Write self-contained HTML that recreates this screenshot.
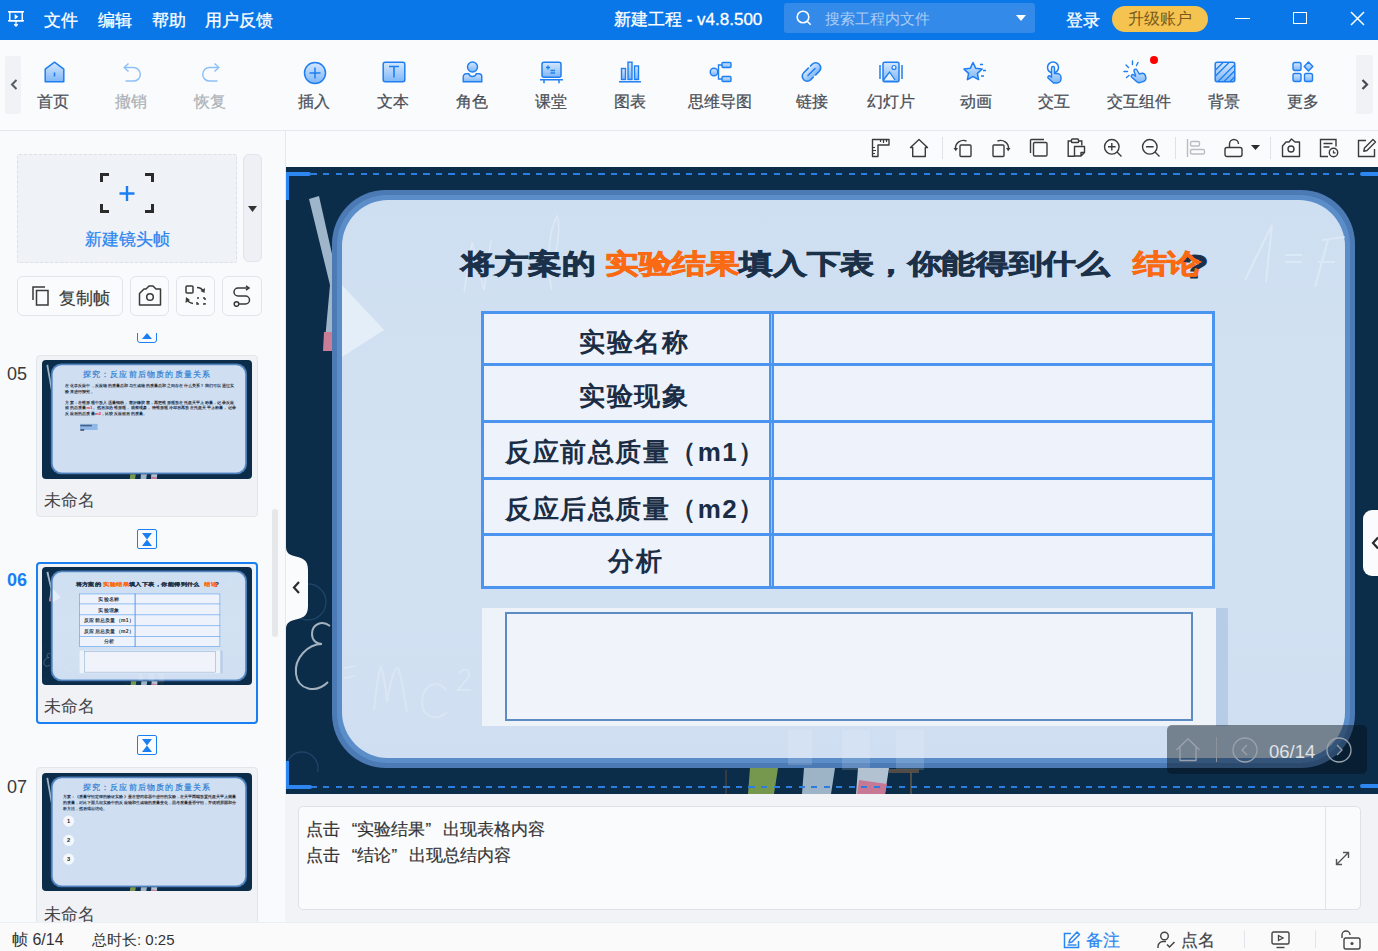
<!DOCTYPE html>
<html><head><meta charset="utf-8">
<style>
*{box-sizing:border-box;margin:0;padding:0}
html,body{width:1378px;height:951px;overflow:hidden;background:#f9fafb;font-family:"Liberation Sans",sans-serif;color:#333}
.a{position:absolute}
.t{position:absolute;white-space:nowrap;line-height:1}
.ql{display:inline-block;width:17.4px;text-align:right;letter-spacing:0}
.qr{display:inline-block;width:17.4px;text-align:left}
/* title bar */
#tb{left:0;top:0;width:1378px;height:40px;background:#0a77e8}
.menu{color:#fff;font-size:16.5px;top:12px;-webkit-text-stroke:.3px #fff}
/* toolbar */
#tool{left:0;top:40px;width:1378px;height:91px;background:#fafbfc;border-bottom:1px solid #e3e7ec}
.lbl{font-size:16px;color:#4a4f57;top:94px;text-align:center;width:80px;margin-left:-40px;-webkit-text-stroke:.25px currentColor}
.dis{color:#aeb2b8}
.ic{position:absolute;top:62px;width:22px;height:22px;margin-left:-11px}
/* left panel */
#lp{left:0;top:131px;width:286px;height:791px;background:#f9fafb;border-right:1px solid #e4e7eb}
#ctool{left:286px;top:131px;width:1092px;height:36px;background:#fafbfc}
#canvas{left:286px;top:167px;width:1092px;height:627px;background:#0c2d49;overflow:hidden}
#notes{left:285px;top:794px;width:1093px;height:128px;background:#f1f3f7}
#status{left:0;top:922px;width:1378px;height:29px;background:#fafafb;border-top:1px solid #eceef1}
</style></head><body>

<!-- TITLE BAR -->
<div id="tb" class="a">
  <svg class="a" style="left:8px;top:10px" width="16" height="17" viewBox="0 0 18 19"><path d="M2 2h14v10H2z" fill="none" stroke="#fff" stroke-width="1.6"/><path d="M0 2h18M0 12h18" stroke="#fff" stroke-width="1.6"/><path d="M7.5 4.5l4 3-4 3z" fill="#fff"/><path d="M9 12v6M7 16l2 2 2-2" stroke="#fff" stroke-width="1.4" fill="none"/></svg>
  <div class="t menu" style="left:44px">文件</div>
  <div class="t menu" style="left:98px">编辑</div>
  <div class="t menu" style="left:152px">帮助</div>
  <div class="t menu" style="left:205px">用户反馈</div>
  <div class="t menu" style="left:614px;top:11px;font-size:17px">新建工程 - v4.8.500</div>
  <div class="a" style="left:784px;top:3px;width:251px;height:30px;background:#338ae8;border-radius:3px"></div>
  <svg class="a" style="left:796px;top:10px" width="17" height="16" viewBox="0 0 17 16"><circle cx="7" cy="7" r="5.8" fill="none" stroke="#fff" stroke-width="1.6"/><path d="M11.2 11.2l3.5 3.5" stroke="#fff" stroke-width="1.6"/></svg>
  <div class="t" style="left:825px;top:11px;font-size:15px;color:#a9cdf6">搜索工程内文件</div>
  <svg class="a" style="left:1016px;top:15px" width="10" height="6"><path d="M0 0h10L5 6z" fill="#fff"/></svg>
  <div class="t menu" style="left:1066px;top:12px">登录</div>
  <div class="a" style="left:1112px;top:6px;width:96px;height:26px;background:#f5c350;border-radius:13px"></div>
  <div class="t" style="left:1128px;top:11px;font-size:16px;color:#7a5a1c">升级账户</div>
  <div class="a" style="left:1235px;top:18px;width:15px;height:1px;background:#fff"></div>
  <div class="a" style="left:1293px;top:12px;width:14px;height:12px;border:1.5px solid #fff"></div>
  <svg class="a" style="left:1350px;top:11px" width="15" height="15"><path d="M1 1l13 13M14 1L1 14" stroke="#fff" stroke-width="1.5"/></svg>
</div>

<!-- TOOLBAR -->
<div id="tool" class="a"></div>
<svg width="0" height="0" style="position:absolute"><defs>
<linearGradient id="g1" x1="0" y1="0" x2="0" y2="1"><stop offset="0" stop-color="#d6e8fd"/><stop offset="1" stop-color="#7db6f7"/></linearGradient>
</defs></svg>
<!-- home -->
<svg class="a" style="left:44px;top:61px" width="21" height="22" viewBox="0 0 21 22"><path d="M10.5 1.2L19.8 8.2V20.8H1.2V8.2Z" fill="url(#g1)" stroke="#1f7ef0" stroke-width="1.5" stroke-linejoin="round"/><path d="M10.5 11.5v4" stroke="#1f7ef0" stroke-width="1.6"/></svg>
<div class="t lbl" style="left:53px">首页</div>
<!-- undo -->
<svg class="a" style="left:122px;top:61px" width="20" height="22" viewBox="0 0 20 22"><path d="M3 6.5h8.5a6.8 6.8 0 0 1 0 13.6H3.5" fill="none" stroke="#8ec0f8" stroke-width="1.5"/><path d="M6.5 2.5L2.2 6.5 6.5 10.5" fill="none" stroke="#8ec0f8" stroke-width="1.5"/></svg>
<div class="t lbl dis" style="left:131px">撤销</div>
<!-- redo -->
<svg class="a" style="left:201px;top:61px" width="20" height="22" viewBox="0 0 20 22"><path d="M17 6.5H8.5a6.8 6.8 0 0 0 0 13.6h8" fill="none" stroke="#8ec0f8" stroke-width="1.5"/><path d="M13.5 2.5L17.8 6.5 13.5 10.5" fill="none" stroke="#8ec0f8" stroke-width="1.5"/></svg>
<div class="t lbl dis" style="left:210px">恢复</div>
<!-- insert -->
<svg class="a" style="left:303px;top:61px" width="24" height="24" viewBox="0 0 24 24"><circle cx="12" cy="12" r="10.5" fill="url(#g1)" stroke="#1f7ef0" stroke-width="1.5"/><path d="M12 6.5v11M6.5 12h11" stroke="#1f7ef0" stroke-width="1.5"/></svg>
<div class="t lbl" style="left:314px">插入</div>
<!-- text -->
<svg class="a" style="left:382px;top:61px" width="24" height="22" viewBox="0 0 24 22"><rect x="1.2" y="1.2" width="21.6" height="19.6" rx="2" fill="url(#g1)" stroke="#1f7ef0" stroke-width="1.5"/><path d="M7 5.5h10M12 5.5v11" stroke="#1f7ef0" stroke-width="1.6"/></svg>
<div class="t lbl" style="left:393px">文本</div>
<!-- role -->
<svg class="a" style="left:462px;top:61px" width="21" height="22" viewBox="0 0 21 22"><circle cx="10.5" cy="6" r="5" fill="url(#g1)" stroke="#1f7ef0" stroke-width="1.4"/><path d="M1.2 20.8v-5a3 3 0 0 1 3-3h2.5a4 4 0 0 0 7.6 0h2.5a3 3 0 0 1 3 3v5z" fill="url(#g1)" stroke="#1f7ef0" stroke-width="1.4"/><path d="M9 6.5h.1M12 6.5h.1" stroke="#1f7ef0" stroke-width="1.2"/></svg>
<div class="t lbl" style="left:472px">角色</div>
<!-- classroom -->
<svg class="a" style="left:540px;top:61px" width="23" height="23" viewBox="0 0 23 23"><rect x="2" y="1.2" width="19" height="15" rx="2" fill="url(#g1)" stroke="#1f7ef0" stroke-width="1.5"/><path d="M6 6.5h4M8 4.5v4M10.5 9.5h4.5M10.5 12h4.5" stroke="#1f7ef0" stroke-width="1.4"/><path d="M0 18.8h23M4 18.8v3.5M19 18.8v3.5" stroke="#1f7ef0" stroke-width="1.5"/></svg>
<div class="t lbl" style="left:551px">课堂</div>
<!-- chart -->
<svg class="a" style="left:619px;top:61px" width="22" height="22" viewBox="0 0 22 22"><rect x="2.5" y="7.5" width="4" height="11" fill="url(#g1)" stroke="#1f7ef0" stroke-width="1.4"/><rect x="9" y="1.2" width="4" height="17.3" fill="url(#g1)" stroke="#1f7ef0" stroke-width="1.4"/><rect x="15.5" y="5" width="4" height="13.5" fill="url(#g1)" stroke="#1f7ef0" stroke-width="1.4"/><path d="M0 20.8h22" stroke="#1f7ef0" stroke-width="1.5"/></svg>
<div class="t lbl" style="left:630px">图表</div>
<!-- mindmap -->
<svg class="a" style="left:709px;top:61px" width="23" height="22" viewBox="0 0 23 22"><circle cx="5" cy="11" r="3.8" fill="url(#g1)" stroke="#1f7ef0" stroke-width="1.4"/><rect x="13" y="1.5" width="9" height="5" rx="1" fill="url(#g1)" stroke="#1f7ef0" stroke-width="1.4"/><rect x="13" y="15.5" width="9" height="5" rx="1" fill="url(#g1)" stroke="#1f7ef0" stroke-width="1.4"/><path d="M13 4H9.5V18H13M8.8 11h0" fill="none" stroke="#1f7ef0" stroke-width="1.4"/></svg>
<div class="t lbl" style="left:720px">思维导图</div>
<!-- link -->
<svg class="a" style="left:800px;top:61px" width="23" height="22" viewBox="0 0 23 22"><g transform="rotate(-45 11.5 11)"><rect x="0.5" y="6" width="22" height="10" rx="5" fill="url(#g1)"/><path d="M12 6H5.5a5 5 0 0 0 0 10H9M12.5 16H17.5a5 5 0 0 0 0-10H15" fill="none" stroke="#1f7ef0" stroke-width="1.6" stroke-linecap="round"/><path d="M6.5 11h10" stroke="#1f7ef0" stroke-width="1.5" stroke-linecap="round"/></g></svg>
<div class="t lbl" style="left:812px">链接</div>
<!-- slides -->
<svg class="a" style="left:879px;top:61px" width="24" height="22" viewBox="0 0 24 22"><rect x="4" y="1.2" width="16" height="19.6" rx="1.5" fill="url(#g1)" stroke="#1f7ef0" stroke-width="1.5"/><path d="M4.5 19L10.5 11l5.5 8" fill="#eaf3fe" stroke="#1f7ef0" stroke-width="1.3"/><circle cx="15" cy="6.5" r="2" fill="#eaf3fe" stroke="#1f7ef0" stroke-width="1.2"/><path d="M1 4v14M23 4v14" stroke="#1f7ef0" stroke-width="1.5"/></svg>
<div class="t lbl" style="left:891px">幻灯片</div>
<!-- animation -->
<svg class="a" style="left:963px;top:61px" width="25" height="22" viewBox="0 0 25 22"><path d="M10 1.5l2.8 5.8 6.2.8-4.6 4.3 1.2 6.2L10 15.6l-5.6 3 1.2-6.2L1 8.1l6.2-.8z" fill="url(#g1)" stroke="#1f7ef0" stroke-width="1.5" stroke-linejoin="round"/><path d="M17 3.5h3M20 9.5h3M18 15h3" stroke="#1f7ef0" stroke-width="1.4"/></svg>
<div class="t lbl" style="left:976px">动画</div>
<!-- interact -->
<svg class="a" style="left:1045px;top:61px" width="20" height="23" viewBox="0 0 20 23"><circle cx="8" cy="6.5" r="5.5" fill="none" stroke="#1f7ef0" stroke-width="1.5"/><path d="M6.5 7a1.5 1.5 0 0 1 3 0v5.5h2.5a4 4 0 0 1 4 4V18a4 4 0 0 1-4 4H8.5L3 17a1.5 1.5 0 0 1 2-2l1.5 1.2z" fill="url(#g1)" stroke="#1f7ef0" stroke-width="1.4" stroke-linejoin="round"/></svg>
<div class="t lbl" style="left:1054px">交互</div>
<!-- interact widget -->
<svg class="a" style="left:1121px;top:58px" width="28" height="26" viewBox="0 0 28 26"><path d="M13 13a1.6 1.6 0 0 1 3-1l2.2 4 2-.5a3.5 3.5 0 0 1 4.2 2.3l.4 1.5a3.5 3.5 0 0 1-2.5 4.3l-3.5 1a3 3 0 0 1-3-.8L10.5 19a1.5 1.5 0 0 1 2.2-2l2 1.2z" fill="url(#g1)" stroke="#1f7ef0" stroke-width="1.4" stroke-linejoin="round"/><path d="M11.5 3v3.5M5 7l2.5 2.5M3 13.5h3.5M5.5 19.5l2.5-2M17 4.5l-1.5 3" stroke="#1f7ef0" stroke-width="1.4" stroke-linecap="round"/></svg>
<div class="a" style="left:1150px;top:56px;width:8px;height:8px;border-radius:50%;background:#f00"></div>
<div class="t lbl" style="left:1139px">交互组件</div>
<!-- background -->
<svg class="a" style="left:1214px;top:61px" width="22" height="22" viewBox="0 0 22 22"><rect x="1.2" y="1.2" width="19.6" height="19.6" rx="2" fill="url(#g1)" stroke="#1f7ef0" stroke-width="1.5"/><path d="M1.5 9L9 1.5M1.5 15L15 1.5M4 20.5L20.5 4M10 20.5L20.5 10M16 20.5l4.5-4.5" stroke="#1f7ef0" stroke-width="1.3"/></svg>
<div class="t lbl" style="left:1224px">背景</div>
<!-- more -->
<svg class="a" style="left:1292px;top:61px" width="22" height="22" viewBox="0 0 22 22"><rect x="1" y="1.5" width="8" height="8" rx="1.8" fill="url(#g1)" stroke="#1f7ef0" stroke-width="1.4"/><rect x="1" y="12.5" width="8" height="8" rx="1.8" fill="url(#g1)" stroke="#1f7ef0" stroke-width="1.4"/><rect x="12.5" y="12.5" width="8" height="8" rx="1.8" fill="url(#g1)" stroke="#1f7ef0" stroke-width="1.4"/><path d="M16.5 1l4.3 4.5-4.3 4.5-4.3-4.5z" fill="url(#g1)" stroke="#1f7ef0" stroke-width="1.4" stroke-linejoin="round"/></svg>
<div class="t lbl" style="left:1303px">更多</div>
<!-- scroll arrows -->
<div class="a" style="left:5px;top:56px;width:16px;height:58px;background:#f1f2f6;border-radius:2px"></div>
<svg class="a" style="left:10px;top:79px" width="8" height="11"><path d="M6.5 1L2 5.5 6.5 10" fill="none" stroke="#555b63" stroke-width="2"/></svg>
<div class="a" style="left:1356px;top:55px;width:17px;height:59px;background:#f1f2f6;border-radius:2px"></div>
<svg class="a" style="left:1361px;top:79px" width="8" height="11"><path d="M1.5 1L6 5.5 1.5 10" fill="none" stroke="#454b53" stroke-width="2.2"/></svg>


<!-- LEFT PANEL -->
<div id="lp" class="a"></div>
<!-- new frame -->
<div class="a" style="left:17px;top:154px;width:220px;height:109px;background:#eff2f7;border:1px dashed #dcdfe6;border-radius:2px"></div>
<svg class="a" style="left:99px;top:172px" width="56" height="42" viewBox="0 0 56 42"><path d="M2.5 10V2.5H10M46 2.5h7.5V10M2.5 32v7.5H10M46 39.5h7.5V32" fill="none" stroke="#2b2b2b" stroke-width="3"/><path d="M28 14v15M20.5 21.5h15" stroke="#1a7ff0" stroke-width="2.4"/></svg>
<div class="t" style="left:85px;top:231px;font-size:16.5px;color:#2a84ee;-webkit-text-stroke:.2px #2a84ee">新建镜头帧</div>
<div class="a" style="left:243px;top:154px;width:19px;height:108px;background:#eef0f5;border:1px solid #e0e3e8;border-radius:6px"></div>
<svg class="a" style="left:248px;top:206px" width="9" height="6"><path d="M0 0h9L4.5 6z" fill="#333"/></svg>
<!-- buttons -->
<div class="a" style="left:17px;top:276px;width:106px;height:40px;background:#fafbfc;border:1px solid #e1e5ea;border-radius:6px"></div>
<svg class="a" style="left:31px;top:285px" width="20" height="22" viewBox="0 0 20 22"><path d="M2 15V2h12" fill="none" stroke="#3a3a3a" stroke-width="1.5"/><rect x="5.5" y="5.5" width="11.5" height="14.5" fill="none" stroke="#3a3a3a" stroke-width="1.5"/></svg>
<div class="t" style="left:59px;top:290px;font-size:16.5px;color:#3b3b3b;-webkit-text-stroke:.2px #3b3b3b">复制帧</div>
<div class="a" style="left:130px;top:276px;width:39px;height:40px;background:#fafbfc;border:1px solid #e1e5ea;border-radius:6px"></div>
<svg class="a" style="left:138px;top:285px" width="24" height="22" viewBox="0 0 24 22"><path d="M1.5 8.5L6 4h2l3-3h4l3 3h4.5v16H1.5z" fill="none" stroke="#3a3a3a" stroke-width="1.5" stroke-linejoin="round"/><circle cx="12" cy="12" r="3.3" fill="none" stroke="#3a3a3a" stroke-width="1.5"/></svg>
<div class="a" style="left:176px;top:276px;width:39px;height:40px;background:#fafbfc;border:1px solid #e1e5ea;border-radius:6px"></div>
<svg class="a" style="left:184px;top:284px" width="24" height="22" viewBox="0 0 24 22"><rect x="2" y="2" width="7" height="7" rx="1" fill="none" stroke="#3a3a3a" stroke-width="1.5"/><path d="M13 14h2M19 14h2M21 14v2M21 19v1h-2M15 20h-2v-2M13 16v0" fill="none" stroke="#3a3a3a" stroke-width="1.5"/><path d="M13 3.5c3 0 5 1 6.5 4" fill="none" stroke="#3a3a3a" stroke-width="1.5"/><path d="M21 4l-.5 5-4-2z" fill="#3a3a3a"/><path d="M9 19.5C6 19 4 18 2.5 15" fill="none" stroke="#3a3a3a" stroke-width="1.5"/><path d="M1.5 19l.5-6 4 3z" fill="#3a3a3a"/></svg>
<div class="a" style="left:222px;top:276px;width:40px;height:40px;background:#fafbfc;border:1px solid #e1e5ea;border-radius:6px"></div>
<svg class="a" style="left:231px;top:285px" width="22" height="22" viewBox="0 0 22 22"><path d="M17.5 3H7a4 4 0 0 0 0 8h7.5a4 4 0 0 1 0 8H8" fill="none" stroke="#3a3a3a" stroke-width="1.5"/><path d="M15 .8l3 2.2-3 2.2" fill="none" stroke="#3a3a3a" stroke-width="1.5"/><circle cx="5.5" cy="19" r="2.3" fill="#fafbfc" stroke="#3a3a3a" stroke-width="1.5"/></svg>
<!-- list -->
<div class="a" style="left:0;top:331px;width:285px;height:591px;overflow:hidden">
  <div class="a" style="left:137px;top:2px;width:20px;height:10px;overflow:hidden"><div class="a" style="left:0;top:-9px;width:20px;height:19px;border:1.7px solid #1a7ff0;border-radius:3px"></div></div>
  <svg class="a" style="left:142px;top:2px" width="10" height="6"><path d="M0 6h10L5 0z" fill="#1a7ff0"/></svg>
  <div class="t" style="left:7px;top:34px;font-size:18px;color:#3a3a3a">05</div>
  <div class="a" style="left:36px;top:24px;width:222px;height:162px;background:#f0f2f6;border:1px solid #e2e5ea;border-radius:4px"></div>
  <div id="th05" class="a" style="left:42px;top:29px;width:210px;height:119px;background:#0c2d49;border-radius:4px;overflow:hidden"><div class="a" style="left:0;top:0;width:1095px;height:622px;transform:scale(.1918);transform-origin:0 0"><svg class="a" style="left:0;top:0" width="120" height="200" viewBox="0 0 120 200"><path d="M23 27l9-3 26 148-8 2z" fill="#9db4c8"/><path d="M40 115l55 42-44 22z" fill="#d6e0ea" opacity=".55"/></svg>
  <div class="a" style="left:46px;top:18px;width:1023px;height:578px;border-radius:54px;background:#4b7ab5"></div>
  <div class="a" style="left:51px;top:23px;width:1013px;height:568px;border-radius:50px;background:#5b8dc9"></div>
  <div class="a" style="left:56px;top:28px;width:1003px;height:558px;border-radius:46px;background:#cfdff1"></div>
  <svg class="a" style="left:420px;top:540px" width="230" height="85" viewBox="0 0 230 85"><path d="M40 56h29l-4 26H38z" fill="#76984e"/><path d="M96 56h31l-4 26H94z" fill="#9db3c6"/><path d="M150 56h31l-4 26h-29z" fill="#b3c2d0"/><path d="M151 68l28 4-2 10h-28z" fill="#c77894"/></svg>
  <div class="t" style="left:0;width:1095px;text-align:center;top:52px;font-size:44px;color:#3f86d6;font-weight:bold;letter-spacing:4px">探究：反应前后物质的质量关系</div>
  <div class="a" style="left:122px;top:118px;width:900px;font-size:22px;line-height:30px;color:#1d2a3a;font-weight:bold;white-space:normal">在化学反应中，反应物的质量总和与生成物的质量总和之间存在什么关系？我们可以通过实验来进行探究。</div>
  <div class="a" style="left:122px;top:205px;width:900px;font-size:22px;line-height:30px;color:#1d2a3a;font-weight:bold;white-space:normal">方案：在锥形瓶中放入适量铜粉，塞好橡胶塞，再把锥形瓶放在托盘天平上称量，记录反应前的总质量<span style="color:#e8242a">m1</span>。然后加热锥形瓶，观察现象，待锥形瓶冷却后再放在托盘天平上称量，记录反应后的总质量<span style="color:#e8242a">m2</span>，比较反应前后的质量。</div>
  <div class="a" style="left:198px;top:333px;width:92px;height:32px;background:#8fb7e8"></div>
  <div class="a" style="left:200px;top:338px;width:60px;height:8px;background:#2a3b55;opacity:.7"></div>
  <div class="a" style="left:200px;top:360px;width:20px;height:10px;background:#2a3b55;opacity:.7"></div>
</div></div>
  <div class="t" style="left:44px;top:161px;font-size:16.5px;color:#444">未命名</div>

  <div class="a" style="left:137px;top:198px;width:20px;height:20px;border:1.5px solid #1a7ff0;border-radius:2px;background:#fafbfc"></div>
  <svg class="a" style="left:142px;top:202px" width="10" height="13"><path d="M0 0h10L5 6.5 10 13H0L5 6.5z" fill="#1a7ff0"/></svg>

  <div class="t" style="left:7px;top:240px;font-size:18px;color:#1a7ff0;font-weight:bold">06</div>
  <div class="a" style="left:36px;top:231px;width:222px;height:162px;background:#f0f2f6;border:2px solid #1a7ff0;border-radius:4px"></div>
  <div id="th06" class="a" style="left:42px;top:236px;width:210px;height:118px;background:#0c2d49;border-radius:4px;overflow:hidden"><div class="a" style="left:0;top:0;width:1095px;height:622px;transform:scale(.1918);transform-origin:0 0">
  <!-- left stick deco -->
  <svg class="a" style="left:0;top:0" width="120" height="200" viewBox="0 0 120 200"><path d="M23 27l10-3 20 89-6 66h-9l6-66z" fill="#9fb5c9"/><path d="M38 160h9l-1 19h-9z" fill="#c97d96"/></svg>
  <!-- frame -->
  <div class="a" style="left:46px;top:18px;width:1023px;height:578px;border-radius:54px;background:#4b7ab5"></div>
  <div class="a" style="left:51px;top:23px;width:1013px;height:568px;border-radius:50px;background:#5b8dc9"></div>
  <div class="a" style="left:56px;top:28px;width:1003px;height:558px;border-radius:46px;background:linear-gradient(180deg,#cedff1 0%,#d3e2f3 50%,#cfdff1 100%)"></div>
  <svg class="a" style="left:56px;top:110px" width="45" height="80" viewBox="0 0 45 80"><path d="M0 3l42 45L0 75z" fill="#f2f6fb" opacity=".6"/></svg>
  <!-- faint formulas -->
  <svg class="a" style="left:0;top:400px" width="200" height="200" viewBox="0 0 200 200"><circle cx="22" cy="30" r="18" fill="none" stroke="#244a70" stroke-width="1.3" opacity=".8"/><circle cx="16" cy="196" r="16" fill="none" stroke="#244a70" stroke-width="1.3" opacity=".8"/><path d="M44 54c-8-6-18-2-18 8 0 6 4 10 10 10-14 0-28 14-26 30 2 16 20 20 32 8" fill="none" stroke="#c9d3dd" stroke-width="2" opacity=".8"/><path d="M58 96l12-2M58 106l12-2M88 138c2-18 4-38 7-43 5 15 5 30 6 35 3-18 7-35 11-34 4 9 6 29 9 44M160 118c-10-13-24-3-24 12 0 15 14 20 25 10M173 102c5-8 13-4 9 4l-10 12h13" fill="none" stroke="#e4ecf6" stroke-width="2.2" opacity=".5"/></svg>
  <svg class="a" style="left:950px;top:45px" width="140" height="90" viewBox="0 0 140 90"><path d="M9 63L36 8l-6 57M49 38h17M49 45h17M79 70l13-47M86 23l23-3M82 45h17" fill="none" stroke="#e6eef7" stroke-width="2.2" opacity=".55"/></svg>
  <svg class="a" style="left:170px;top:40px" width="120" height="100" viewBox="0 0 120 100"><path d="M8 80L16 30l12 48 7-50M96 78c-6-20-4-58 5-74 4 10 0 40-5 48" fill="none" stroke="#e6eef7" stroke-width="1.6" opacity=".6"/></svg>
  <!-- title -->
  <div class="t" style="left:175px;top:79px;font-size:29px;font-weight:bold;color:#1b3149;transform:scale(1.16,.93);transform-origin:0 0;-webkit-text-stroke:.9px #1b3149">将方案的 <span style="color:#fa6a12;-webkit-text-stroke:.9px #fa6a12">实验结果</span>填入下表，你能得到什么</div>
  <div class="t" style="left:895px;top:77px;font-size:35px;font-weight:bold;color:#1b3149;transform:scale(1.3,.95);transform-origin:0 0;-webkit-text-stroke:1px #1b3149">?</div>
  <div class="t" style="left:847px;top:79px;font-size:29px;font-weight:bold;color:#fa6a12;transform:scale(1.16,.93);transform-origin:0 0;-webkit-text-stroke:.9px #fa6a12">结论</div>
  <!-- table -->
  <div class="a" style="left:195px;top:139px;width:734px;height:278px;background:#eef3fb;border:3px solid #4b94f0"></div>
  <div class="a" style="left:483px;top:139px;width:5px;height:278px;background:#4b94f0"></div>
  <div class="a" style="left:485px;top:142px;width:1px;height:272px;background:#9cc3f5"></div>
  <div class="a" style="left:195px;top:191px;width:734px;height:3px;background:#4b94f0"></div>
  <div class="a" style="left:195px;top:248px;width:734px;height:3px;background:#4b94f0"></div>
  <div class="a" style="left:195px;top:305px;width:734px;height:3px;background:#4b94f0"></div>
  <div class="a" style="left:195px;top:361px;width:734px;height:3px;background:#4b94f0"></div>
  <div class="t" style="left:206px;width:285px;text-align:center;top:157px;font-size:26px;font-weight:bold;color:#1a2d45;letter-spacing:1.8px">实验名称</div>
  <div class="t" style="left:206px;width:285px;text-align:center;top:211px;font-size:26px;font-weight:bold;color:#1a2d45;letter-spacing:1.8px">实验现象</div>
  <div class="t" style="left:207px;width:285px;text-align:center;top:267px;font-size:26px;font-weight:bold;color:#1a2d45;letter-spacing:1.5px">反应前总质量（m1）</div>
  <div class="t" style="left:207px;width:285px;text-align:center;top:324px;font-size:26px;font-weight:bold;color:#1a2d45;letter-spacing:1.5px">反应后总质量（m2）</div>
  <div class="t" style="left:207px;width:285px;text-align:center;top:376px;font-size:26px;font-weight:bold;color:#1a2d45;letter-spacing:2px">分析</div>
  <!-- summary -->
  <div class="a" style="left:196px;top:436px;width:734px;height:118px;background:#eef3f9"></div>
  <div class="a" style="left:219px;top:440px;width:688px;height:109px;border:2px solid #5d8cc4;background:#f0f4fa"></div>
  <div class="a" style="left:930px;top:436px;width:12px;height:118px;background:#b7cde7"></div>
  <!-- bottom beakers -->
  <svg class="a" style="left:420px;top:540px" width="230" height="85" viewBox="0 0 230 85"><g fill="#f4f8fc" opacity=".15"><path d="M82 18h24v35H82zM136 18h28v40h-28zM190 18h28v40h-28z"/></g><path d="M44 56h28l-4 26H42z" fill="#76984e"/><path d="M98 56h31l-4 26H96z" fill="#9db3c6"/><path d="M152 56h31l-4 26h-29z" fill="#b3c2d0"/><path d="M153 68l28 4-2 10h-28z" fill="#c77894"/><path d="M20 58v26" stroke="#5a4a3a" stroke-width="1.6" opacity=".7"/><path d="M183 57h30v4h-30z" fill="#5e5246" opacity=".85"/><path d="M205 60v24" stroke="#6a5a48" stroke-width="1.8" opacity=".8"/></svg>
</div>

  </div>
  <div class="t" style="left:44px;top:367px;font-size:16.5px;color:#444">未命名</div>

  <div class="a" style="left:137px;top:404px;width:20px;height:20px;border:1.5px solid #1a7ff0;border-radius:2px;background:#fafbfc"></div>
  <svg class="a" style="left:142px;top:408px" width="10" height="13"><path d="M0 0h10L5 6.5 10 13H0L5 6.5z" fill="#1a7ff0"/></svg>

  <div class="t" style="left:7px;top:447px;font-size:18px;color:#3a3a3a">07</div>
  <div class="a" style="left:36px;top:436px;width:222px;height:162px;background:#f0f2f6;border:1px solid #e2e5ea;border-radius:4px"></div>
  <div id="th07" class="a" style="left:42px;top:442px;width:210px;height:118px;background:#0c2d49;border-radius:4px;overflow:hidden"><div class="a" style="left:0;top:0;width:1095px;height:622px;transform:scale(.1918);transform-origin:0 0"><svg class="a" style="left:0;top:0" width="120" height="200" viewBox="0 0 120 200"><path d="M23 27l9-3 26 148-8 2z" fill="#9db4c8"/><path d="M40 115l55 42-44 22z" fill="#d6e0ea" opacity=".55"/></svg>
  <div class="a" style="left:46px;top:18px;width:1023px;height:578px;border-radius:54px;background:#4b7ab5"></div>
  <div class="a" style="left:51px;top:23px;width:1013px;height:568px;border-radius:50px;background:#5b8dc9"></div>
  <div class="a" style="left:56px;top:28px;width:1003px;height:558px;border-radius:46px;background:#cfdff1"></div>
  <svg class="a" style="left:420px;top:540px" width="230" height="85" viewBox="0 0 230 85"><path d="M40 56h29l-4 26H38z" fill="#76984e"/><path d="M96 56h31l-4 26H94z" fill="#9db3c6"/><path d="M150 56h31l-4 26h-29z" fill="#b3c2d0"/><path d="M151 68l28 4-2 10h-28z" fill="#c77894"/></svg>
  <div class="t" style="left:0;width:1095px;text-align:center;top:52px;font-size:44px;color:#3f86d6;font-weight:bold;letter-spacing:4px">探究：反应前后物质的质量关系</div>
  <div class="a" style="left:110px;top:108px;width:920px;font-size:21px;line-height:32px;color:#1d2a3a;font-weight:bold;white-space:normal">方案：《质量守恒定律的验证实验》是在密闭容器中进行的实验，在天平两端放置托盘天平上测量的质量，对比下面几组实验中的反应物和生成物的质量变化，思考质量是否守恒，并说明原因和分析方法，然后得出结论。</div>
  <div class="a" style="left:110px;top:222px;width:58px;height:58px;border-radius:50%;background:#f4f7fb"></div><div class="t" style="left:110px;width:58px;text-align:center;top:236px;font-size:30px;font-weight:bold;color:#1d2a3a">1</div>
  <div class="a" style="left:110px;top:322px;width:58px;height:58px;border-radius:50%;background:#f4f7fb"></div><div class="t" style="left:110px;width:58px;text-align:center;top:336px;font-size:30px;font-weight:bold;color:#1d2a3a">2</div>
  <div class="a" style="left:110px;top:420px;width:58px;height:58px;border-radius:50%;background:#f4f7fb"></div><div class="t" style="left:110px;width:58px;text-align:center;top:434px;font-size:30px;font-weight:bold;color:#1d2a3a">3</div>
</div></div>
  <div class="t" style="left:44px;top:575px;font-size:16.5px;color:#444">未命名</div>
</div>
<div class="a" style="left:272px;top:509px;width:6px;height:128px;background:#e6e7ea;border-radius:3px"></div>


<!-- CANVAS TOOLBAR -->
<div id="ctool" class="a"></div>
<div class="a" style="left:286px;top:130px;width:1092px;height:1px;background:#e6e9ee"></div>
<svg class="a" style="left:871px;top:138px" width="20" height="20" viewBox="0 0 20 20"><path d="M1.5 1.5h16.5v5.5H7v11.5H1.5z" fill="none" stroke="#3b3b3b" stroke-width="1.4" stroke-linejoin="round"/><path d="M9.5 1.5v2.5M12.5 1.5v3.5M15.5 1.5v2.5M1.5 9.5H4M1.5 12.5H5M1.5 15.5H4" stroke="#3b3b3b" stroke-width="1.2"/></svg>
<svg class="a" style="left:909px;top:138px" width="20" height="20" viewBox="0 0 20 20"><path d="M10 1.5L18.5 9.5h-2.2v9H3.7v-9H1.5z" fill="none" stroke="#3b3b3b" stroke-width="1.4" stroke-linejoin="round"/></svg>
<div class="a" style="left:942px;top:137px;width:1px;height:22px;background:#dfe3e8"></div>
<svg class="a" style="left:953px;top:138px" width="20" height="20" viewBox="0 0 20 20"><rect x="7" y="7" width="11" height="11.5" rx="1" fill="none" stroke="#3b3b3b" stroke-width="1.4"/><path d="M2.5 11a8 8 0 0 1 11-8" fill="none" stroke="#3b3b3b" stroke-width="1.4"/><path d="M.5 10h4.5l-2.2 3.2z" fill="#3b3b3b"/></svg>
<svg class="a" style="left:991px;top:138px" width="20" height="20" viewBox="0 0 20 20"><rect x="2" y="7" width="11" height="11.5" rx="1" fill="none" stroke="#3b3b3b" stroke-width="1.4"/><path d="M6.5 3a8 8 0 0 1 11 8" fill="none" stroke="#3b3b3b" stroke-width="1.4"/><path d="M15 10h4.5l-2.3 3.2z" fill="#3b3b3b"/></svg>
<svg class="a" style="left:1029px;top:138px" width="20" height="20" viewBox="0 0 20 20"><path d="M1.5 15V2.5a1 1 0 0 1 1-1H15" fill="none" stroke="#3b3b3b" stroke-width="1.4"/><rect x="4.5" y="4.5" width="13.5" height="13.5" rx="1.2" fill="none" stroke="#3b3b3b" stroke-width="1.4"/></svg>
<svg class="a" style="left:1066px;top:137px" width="20" height="21" viewBox="0 0 20 21"><path d="M5 4H2.2v15.3H8.5M13 4h2.8v4.5" fill="none" stroke="#3b3b3b" stroke-width="1.4"/><rect x="5.5" y="2" width="7" height="3.5" rx=".8" fill="none" stroke="#3b3b3b" stroke-width="1.4"/><path d="M8.5 9.5h10v6l-3.5 3.5h-6.5z M18.5 15.5h-3.5V19" fill="none" stroke="#3b3b3b" stroke-width="1.4" stroke-linejoin="round"/></svg>
<svg class="a" style="left:1103px;top:138px" width="20" height="20" viewBox="0 0 20 20"><circle cx="8.8" cy="8.8" r="7.3" fill="none" stroke="#3b3b3b" stroke-width="1.4"/><path d="M14 14l4.5 4.5M8.8 5v7.6M5 8.8h7.6" stroke="#3b3b3b" stroke-width="1.4"/></svg>
<svg class="a" style="left:1141px;top:138px" width="20" height="20" viewBox="0 0 20 20"><circle cx="8.8" cy="8.8" r="7.3" fill="none" stroke="#3b3b3b" stroke-width="1.4"/><path d="M14 14l4.5 4.5M5 8.8h7.6" stroke="#3b3b3b" stroke-width="1.4"/></svg>
<div class="a" style="left:1175px;top:137px;width:1px;height:22px;background:#dfe3e8"></div>
<svg class="a" style="left:1186px;top:138px" width="20" height="20" viewBox="0 0 20 20"><path d="M1.5 1v18" stroke="#b9bdc3" stroke-width="1.4"/><rect x="4.5" y="3.5" width="9" height="4.5" rx="1.5" fill="none" stroke="#b9bdc3" stroke-width="1.4"/><rect x="4.5" y="11.5" width="14" height="4.5" rx="1.5" fill="none" stroke="#b9bdc3" stroke-width="1.4"/></svg>
<svg class="a" style="left:1224px;top:138px" width="20" height="20" viewBox="0 0 20 20"><rect x="1" y="9.5" width="17" height="9" rx="2" fill="none" stroke="#3b3b3b" stroke-width="1.4"/><path d="M5.5 9.5V6a4.5 4.5 0 0 1 9 0" fill="none" stroke="#3b3b3b" stroke-width="1.4"/></svg>
<svg class="a" style="left:1251px;top:145px" width="9" height="5"><path d="M0 0h9L4.5 5z" fill="#2b2b2b"/></svg>
<div class="a" style="left:1270px;top:137px;width:1px;height:22px;background:#dfe3e8"></div>
<svg class="a" style="left:1281px;top:138px" width="20" height="20" viewBox="0 0 20 20"><path d="M1.5 8L5 4h3l2.5-3h0L14 4h4.5v14.5h-17z" fill="none" stroke="#3b3b3b" stroke-width="1.4" stroke-linejoin="round"/><circle cx="10" cy="11" r="3" fill="none" stroke="#3b3b3b" stroke-width="1.4"/></svg>
<svg class="a" style="left:1319px;top:138px" width="20" height="20" viewBox="0 0 20 20"><path d="M9 18.5H1.5V1.5h15.5v7" fill="none" stroke="#3b3b3b" stroke-width="1.4"/><path d="M4.5 5.5h9M4.5 9h6" stroke="#3b3b3b" stroke-width="1.4"/><circle cx="14.5" cy="14.5" r="4.2" fill="none" stroke="#3b3b3b" stroke-width="1.4"/><path d="M14.5 12.5v2.3h2" fill="none" stroke="#3b3b3b" stroke-width="1.2"/></svg>
<svg class="a" style="left:1357px;top:138px" width="20" height="20" viewBox="0 0 20 20"><path d="M9 2.5H1.5v16h16V11" fill="none" stroke="#3b3b3b" stroke-width="1.4"/><path d="M16 1.5l2.5 2.5-8.5 8.5-3.2.7.7-3.2z" fill="none" stroke="#3b3b3b" stroke-width="1.4" stroke-linejoin="round"/></svg>


<!-- CANVAS -->
<div id="canvas" class="a">
<div class="a" style="left:0;top:5px;width:1095px;height:622px">
  <!-- left stick deco -->
  <svg class="a" style="left:0;top:0" width="120" height="200" viewBox="0 0 120 200"><path d="M23 27l10-3 20 89-6 66h-9l6-66z" fill="#9fb5c9"/><path d="M38 160h9l-1 19h-9z" fill="#c97d96"/></svg>
  <!-- frame -->
  <div class="a" style="left:46px;top:18px;width:1023px;height:578px;border-radius:54px;background:#4b7ab5"></div>
  <div class="a" style="left:51px;top:23px;width:1013px;height:568px;border-radius:50px;background:#5b8dc9"></div>
  <div class="a" style="left:56px;top:28px;width:1003px;height:558px;border-radius:46px;background:linear-gradient(180deg,#cedff1 0%,#d3e2f3 50%,#cfdff1 100%)"></div>
  <svg class="a" style="left:56px;top:110px" width="45" height="80" viewBox="0 0 45 80"><path d="M0 3l42 45L0 75z" fill="#f2f6fb" opacity=".6"/></svg>
  <!-- faint formulas -->
  <svg class="a" style="left:0;top:400px" width="200" height="200" viewBox="0 0 200 200"><circle cx="22" cy="30" r="18" fill="none" stroke="#244a70" stroke-width="1.3" opacity=".8"/><circle cx="16" cy="196" r="16" fill="none" stroke="#244a70" stroke-width="1.3" opacity=".8"/><path d="M44 54c-8-6-18-2-18 8 0 6 4 10 10 10-14 0-28 14-26 30 2 16 20 20 32 8" fill="none" stroke="#c9d3dd" stroke-width="2" opacity=".8"/><path d="M58 96l12-2M58 106l12-2M88 138c2-18 4-38 7-43 5 15 5 30 6 35 3-18 7-35 11-34 4 9 6 29 9 44M160 118c-10-13-24-3-24 12 0 15 14 20 25 10M173 102c5-8 13-4 9 4l-10 12h13" fill="none" stroke="#e4ecf6" stroke-width="2.2" opacity=".5"/></svg>
  <svg class="a" style="left:950px;top:45px" width="140" height="90" viewBox="0 0 140 90"><path d="M9 63L36 8l-6 57M49 38h17M49 45h17M79 70l13-47M86 23l23-3M82 45h17" fill="none" stroke="#e6eef7" stroke-width="2.2" opacity=".55"/></svg>
  <svg class="a" style="left:170px;top:40px" width="120" height="100" viewBox="0 0 120 100"><path d="M8 80L16 30l12 48 7-50M96 78c-6-20-4-58 5-74 4 10 0 40-5 48" fill="none" stroke="#e6eef7" stroke-width="1.6" opacity=".6"/></svg>
  <!-- title -->
  <div class="t" style="left:175px;top:79px;font-size:29px;font-weight:bold;color:#1b3149;transform:scale(1.16,.93);transform-origin:0 0;-webkit-text-stroke:.9px #1b3149">将方案的 <span style="color:#fa6a12;-webkit-text-stroke:.9px #fa6a12">实验结果</span>填入下表，你能得到什么</div>
  <div class="t" style="left:895px;top:77px;font-size:35px;font-weight:bold;color:#1b3149;transform:scale(1.3,.95);transform-origin:0 0;-webkit-text-stroke:1px #1b3149">?</div>
  <div class="t" style="left:847px;top:79px;font-size:29px;font-weight:bold;color:#fa6a12;transform:scale(1.16,.93);transform-origin:0 0;-webkit-text-stroke:.9px #fa6a12">结论</div>
  <!-- table -->
  <div class="a" style="left:195px;top:139px;width:734px;height:278px;background:#eef3fb;border:3px solid #4b94f0"></div>
  <div class="a" style="left:483px;top:139px;width:5px;height:278px;background:#4b94f0"></div>
  <div class="a" style="left:485px;top:142px;width:1px;height:272px;background:#9cc3f5"></div>
  <div class="a" style="left:195px;top:191px;width:734px;height:3px;background:#4b94f0"></div>
  <div class="a" style="left:195px;top:248px;width:734px;height:3px;background:#4b94f0"></div>
  <div class="a" style="left:195px;top:305px;width:734px;height:3px;background:#4b94f0"></div>
  <div class="a" style="left:195px;top:361px;width:734px;height:3px;background:#4b94f0"></div>
  <div class="t" style="left:206px;width:285px;text-align:center;top:157px;font-size:26px;font-weight:bold;color:#1a2d45;letter-spacing:1.8px">实验名称</div>
  <div class="t" style="left:206px;width:285px;text-align:center;top:211px;font-size:26px;font-weight:bold;color:#1a2d45;letter-spacing:1.8px">实验现象</div>
  <div class="t" style="left:207px;width:285px;text-align:center;top:267px;font-size:26px;font-weight:bold;color:#1a2d45;letter-spacing:1.5px">反应前总质量（m1）</div>
  <div class="t" style="left:207px;width:285px;text-align:center;top:324px;font-size:26px;font-weight:bold;color:#1a2d45;letter-spacing:1.5px">反应后总质量（m2）</div>
  <div class="t" style="left:207px;width:285px;text-align:center;top:376px;font-size:26px;font-weight:bold;color:#1a2d45;letter-spacing:2px">分析</div>
  <!-- summary -->
  <div class="a" style="left:196px;top:436px;width:734px;height:118px;background:#eef3f9"></div>
  <div class="a" style="left:219px;top:440px;width:688px;height:109px;border:2px solid #5d8cc4;background:#f0f4fa"></div>
  <div class="a" style="left:930px;top:436px;width:12px;height:118px;background:#b7cde7"></div>
  <!-- bottom beakers -->
  <svg class="a" style="left:420px;top:540px" width="230" height="85" viewBox="0 0 230 85"><g fill="#f4f8fc" opacity=".15"><path d="M82 18h24v35H82zM136 18h28v40h-28zM190 18h28v40h-28z"/></g><path d="M44 56h28l-4 26H42z" fill="#76984e"/><path d="M98 56h31l-4 26H96z" fill="#9db3c6"/><path d="M152 56h31l-4 26h-29z" fill="#b3c2d0"/><path d="M153 68l28 4-2 10h-28z" fill="#c77894"/><path d="M20 58v26" stroke="#5a4a3a" stroke-width="1.6" opacity=".7"/><path d="M183 57h30v4h-30z" fill="#5e5246" opacity=".85"/><path d="M205 60v24" stroke="#6a5a48" stroke-width="1.8" opacity=".8"/></svg>
</div>

  <!-- selection overlay -->
  <div class="a" style="left:0;top:6px;width:1092px;height:2px;background:repeating-linear-gradient(90deg,#2b7de0 0 6px,transparent 6px 12.5px)"></div>
  <div class="a" style="left:0;top:619px;width:1092px;height:2px;background:repeating-linear-gradient(90deg,#2b7de0 0 6px,transparent 6px 12.5px)"></div>
  <div class="a" style="left:0;top:5px;width:25px;height:4px;background:#2e86f0;border-radius:2px"></div>
  <div class="a" style="left:0;top:5px;width:3px;height:28px;background:#2e86f0"></div>
  <div class="a" style="left:0;top:618px;width:26px;height:4px;background:#2e86f0;border-radius:2px"></div>
  <div class="a" style="left:0;top:594px;width:3px;height:28px;background:#2e86f0"></div>
  <div class="a" style="left:1074px;top:5px;width:25px;height:4px;background:#2e86f0;border-radius:2px"></div>
  <div class="a" style="left:1074px;top:617px;width:25px;height:4px;background:#2e86f0;border-radius:2px"></div>
  <!-- nav overlay -->
  <div class="a" style="left:881px;top:558px;width:200px;height:49px;background:rgba(5,15,25,.45);border-radius:5px"></div>
  <svg class="a" style="left:889px;top:570px" width="26" height="25" viewBox="0 0 26 25"><path d="M1.5 13L13 1.8 24.5 13M5 9.5v14h16v-14" fill="none" stroke="#9aa3ad" stroke-width="1.3" stroke-linejoin="round"/></svg>
  <div class="a" style="left:930px;top:570px;width:1px;height:25px;background:#8a939c"></div>
  <svg class="a" style="left:946px;top:570px" width="26" height="26" viewBox="0 0 26 26"><circle cx="13" cy="13" r="12" fill="none" stroke="#9aa3ad" stroke-width="1.3"/><path d="M15 8l-5 5 5 5" fill="none" stroke="#9aa3ad" stroke-width="1.3"/></svg>
  <div class="t" style="left:983px;top:576px;font-size:18.5px;color:#dfe3e7;font-weight:300">06/14</div>
  <svg class="a" style="left:1040px;top:570px" width="26" height="26" viewBox="0 0 26 26"><circle cx="13" cy="13" r="12" fill="none" stroke="#9aa3ad" stroke-width="1.3"/><path d="M11 8l5 5-5 5" fill="none" stroke="#9aa3ad" stroke-width="1.3"/></svg>
  <!-- collapse tabs -->
  <svg class="a" style="left:0;top:380px" width="24" height="82" viewBox="0 0 24 82"><path d="M0 0c0 6 4 8 8 9 8 2 14 3 14 14v36c0 11-6 12-14 14-4 1-8 3-8 9z" fill="#fafbfc"/><path d="M13 35l-5 5.5 5 5.5" fill="none" stroke="#2b2b2b" stroke-width="2.2"/></svg>
  <div class="a" style="left:1077px;top:343px;width:20px;height:66px;background:#fafbfc;border-radius:9px 0 0 9px"></div>
  <svg class="a" style="left:1085px;top:369px" width="9" height="14"><path d="M7 1.5L2 7l5 5.5" fill="none" stroke="#2b2b2b" stroke-width="2.2"/></svg>
</div>

<!-- NOTES -->
<div id="notes" class="a"></div>
<div class="a" style="left:298px;top:806px;width:1063px;height:104px;background:#fafbfc;border:1px solid #dde2e8;border-radius:5px"></div>
<div class="a" style="left:1325px;top:807px;width:1px;height:102px;background:#e1e5ea"></div>
<div class="t" style="left:306px;top:817px;font-size:17px;color:#333;line-height:26px;-webkit-text-stroke:.2px #333">点击<span class="ql">“</span>实验结果<span class="qr">”</span>出现表格内容<br>点击<span class="ql">“</span>结论<span class="qr">”</span>出现总结内容</div>
<svg class="a" style="left:1335px;top:851px" width="15" height="15" viewBox="0 0 15 15"><path d="M1.5 13.5l12-12M8 1.5h5.5V7M1.5 8v5.5H7" fill="none" stroke="#555" stroke-width="1.4"/></svg>


<!-- STATUS -->
<div id="status" class="a"></div>
<div class="t" style="left:12px;top:932px;font-size:16px;color:#333">帧 6/14</div>
<div class="t" style="left:92px;top:932px;font-size:15px;color:#333">总时长: 0:25</div>
<svg class="a" style="left:1063px;top:931px" width="18" height="18" viewBox="0 0 18 18"><path d="M8 2.5H1.5v14h14V10" fill="none" stroke="#2a86f0" stroke-width="1.5"/><path d="M14 1l2.5 2.5L9 11l-3 .8.8-3z" fill="none" stroke="#2a86f0" stroke-width="1.5" stroke-linejoin="round"/><path d="M4.5 14h9" stroke="#2a86f0" stroke-width="1.4"/></svg>
<div class="t" style="left:1086px;top:932px;font-size:16.5px;color:#2a86f0;-webkit-text-stroke:.2px #2a86f0">备注</div>
<svg class="a" style="left:1157px;top:931px" width="19" height="18" viewBox="0 0 19 18"><circle cx="7.5" cy="5" r="3.8" fill="none" stroke="#444" stroke-width="1.4"/><path d="M1 17v-1.5a5 5 0 0 1 5-5h3" fill="none" stroke="#444" stroke-width="1.4"/><path d="M10 13.5l2.5 2.5 5-5" fill="none" stroke="#444" stroke-width="1.5"/></svg>
<div class="t" style="left:1181px;top:932px;font-size:16.5px;color:#444;-webkit-text-stroke:.2px #444">点名</div>
<div class="a" style="left:1244px;top:930px;width:1px;height:18px;background:#e2e5e9"></div>
<svg class="a" style="left:1271px;top:931px" width="19" height="18" viewBox="0 0 19 18"><rect x="1" y="1" width="17" height="12" rx="1.5" fill="none" stroke="#444" stroke-width="1.4"/><path d="M7.5 4.5l4.5 2.5-4.5 2.5z" fill="none" stroke="#444" stroke-width="1.3"/><path d="M5.5 16.5h8" stroke="#444" stroke-width="1.4"/></svg>
<div class="a" style="left:1315px;top:930px;width:1px;height:18px;background:#e2e5e9"></div>
<svg class="a" style="left:1341px;top:930px" width="20" height="20" viewBox="0 0 20 20"><rect x="3" y="8" width="16" height="11" rx="2" fill="none" stroke="#444" stroke-width="1.4"/><path d="M1 8V5a4 4 0 0 1 8 0" fill="none" stroke="#444" stroke-width="1.4"/><circle cx="11" cy="13.5" r="1.5" fill="#444"/></svg>


</body></html>
